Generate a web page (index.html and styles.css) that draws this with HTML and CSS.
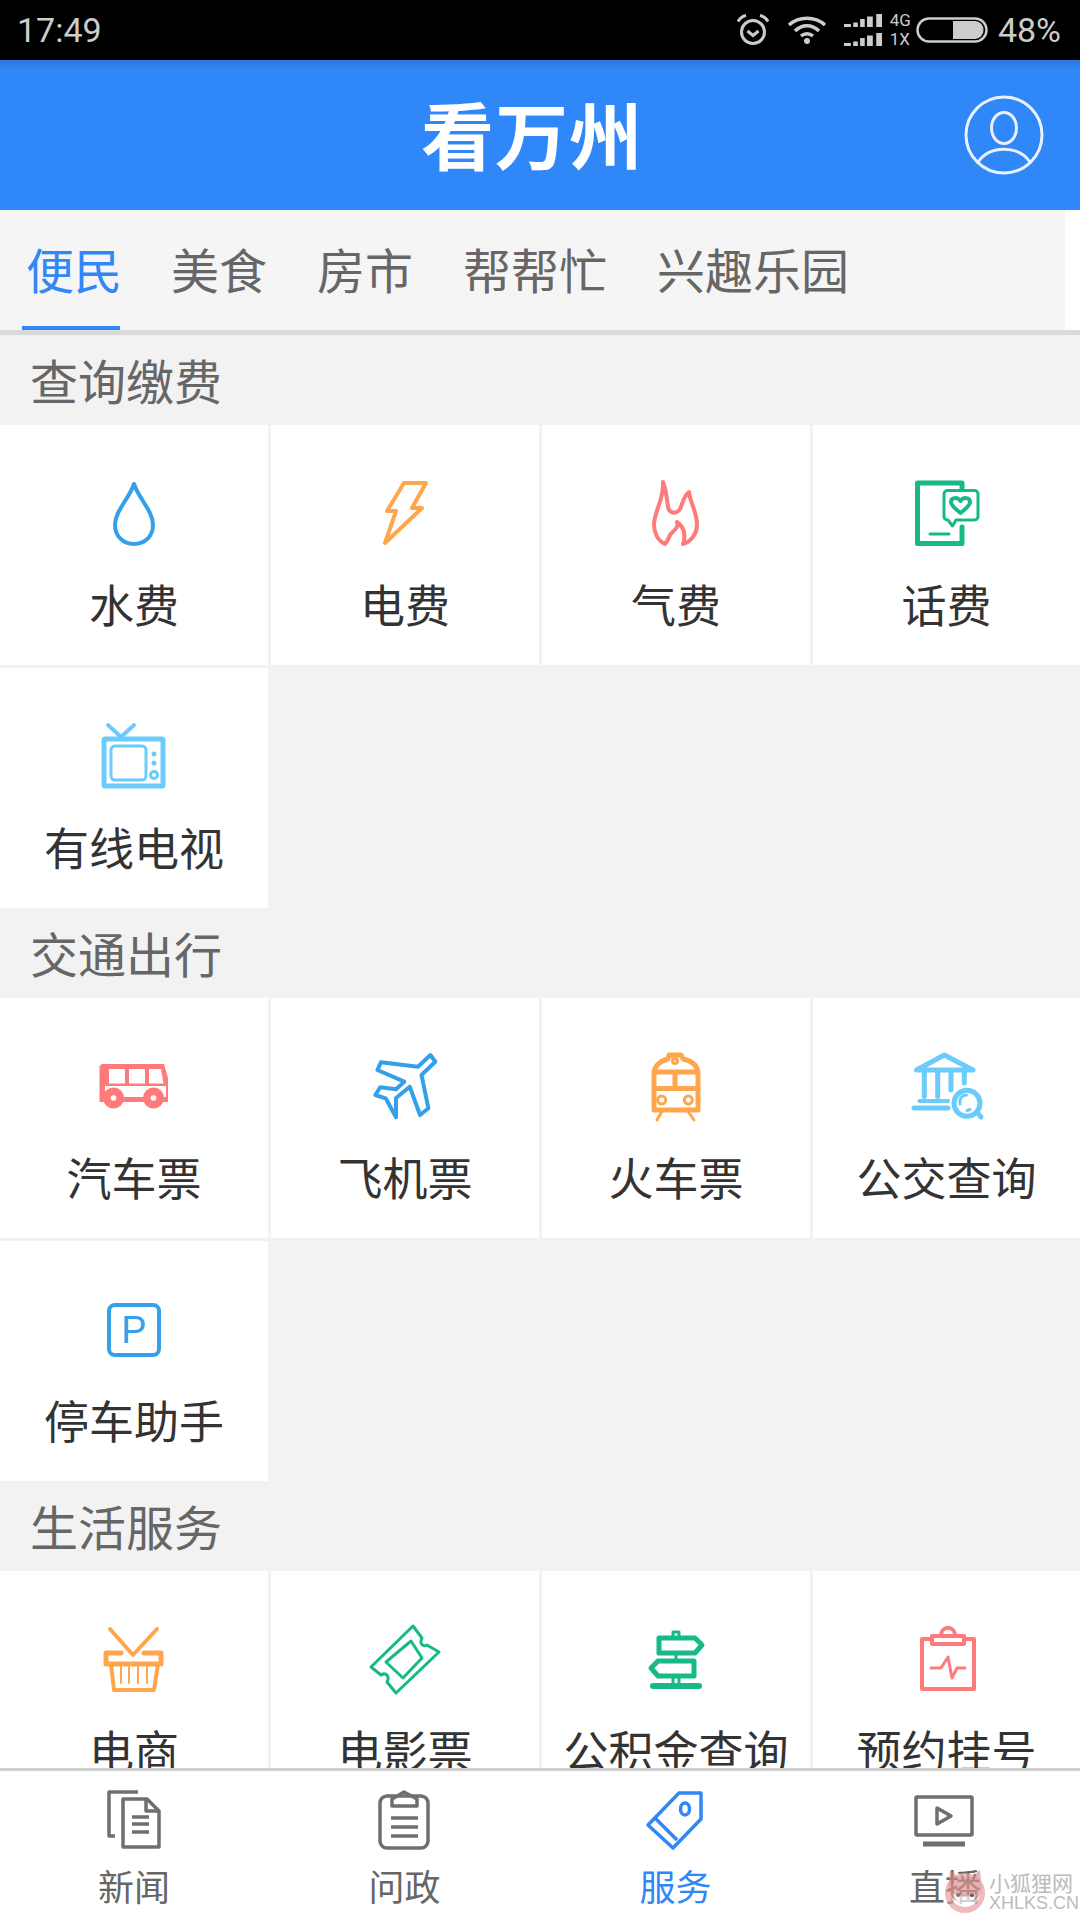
FILE: index.html
```html
<!DOCTYPE html>
<html lang="zh-CN">
<head>
<meta charset="utf-8">
<title>看万州</title>
<link rel="stylesheet" href="styles.css">
</head>
<body>
<div class="app">
  <div class="status">
    <span class="clock">17:49</span>
    <div class="status-right">
      <svg class="s-alarm" viewBox="0 0 36 36"><circle cx="18" cy="20" r="11.500"/><path d="M12.500 19l5.500 4.500 5.500-4.500"/><path d="M3 9.500C5 6 8 4 11 3.500M33 9.500C31 6 28 4 25 3.500"/></svg>
      <svg class="s-wifi" viewBox="0 0 40 30"><path d="M2 10C12 1 28 1 38 10"/><path d="M8 16C15 9 25 9 32 16"/><path d="M14 21C17.500 18 22.500 18 26 21"/><circle class="dot" cx="20" cy="26" r="3"/></svg>
      <svg class="s-signal" viewBox="0 0 33 33" preserveAspectRatio="none"><path d="M0 10h6v3H0zM8 8.500h4V13H8zM14 5h4v8h-4zM20 2.500h5V13h-5zM28 0h5v13h-5z"/><path d="M0 29h6v3H0zM8 27.500h4V32H8zM14 24h4v8h-4zM20 21.500h5V32h-5zM28 19h5v13h-5z"/></svg>
      <div class="s-net"><span>4G</span><span>1X</span></div>
      <svg class="s-batt" viewBox="0 0 72 26"><rect x="1.500" y="1.500" width="69" height="23" rx="11.500"/><path class="fill" d="M37 4h22a8.500 8.500 0 0 1 8.500 9 8.500 8.500 0 0 1-8.500 9H37z"/></svg>
      <span class="pct">48%</span>
    </div>
  </div>

  <header class="header">
    <h1 class="title">看万州</h1>
    <svg class="avatar" viewBox="0 0 80 80"><circle cx="40" cy="40" r="38"/><ellipse cx="40" cy="33" rx="12.500" ry="15.500"/><path d="M14 67C26 50 54 50 66 67"/></svg>
  </header>

  <nav class="tabs">
    <a class="tab active"><span>便民</span></a>
    <a class="tab"><span>美食</span></a>
    <a class="tab"><span>房市</span></a>
    <a class="tab"><span>帮帮忙</span></a>
    <a class="tab"><span>兴趣乐园</span></a>
  </nav>

  <main class="content">
    <h2 class="section">查询缴费</h2>
    <div class="grid">
      <div class="cell"><svg class="ico st-blue" viewBox="0 0 80 80"><path d="M40 11C35 26 21 38 21 52C21 63 29 71 40 71S59 63 59 52C59 38 45 26 40 11Z"/></svg><span class="lbl">水费</span></div>
      <div class="cell"><svg class="ico st-orange" viewBox="0 0 80 80"><path d="M39 10H61L47 35H57L20 70L31 38H22Z"/></svg><span class="lbl">电费</span></div>
      <div class="cell"><svg class="ico st-red" viewBox="0 0 80 80"><path d="M27 9C31 20 31 28 32 34C33 40 40 42 44 36C47 30 47 24 53 19C54 30 61 38 61 52C61 60 56 68 47 71C50 62 48 54 41 49C43 56 36 58 34 62C32 66 32 68 29 71C22 68 18 60 18 52C18 38 28 28 27 9Z"/></svg><span class="lbl">气费</span></div>
      <div class="cell"><svg class="ico st-green" viewBox="0 0 80 80"><path class="w5" d="M55 16V10H10.500V70.500H55V54"/><path class="w3" d="M23 61H42"/><path class="w3" d="M37 21a3.500 3.500 0 0 1 3.500-3.500H67.500a3.500 3.500 0 0 1 3.500 3.500V43.500a3.500 3.500 0 0 1-3.500 3.500H49L45.500 53L41 47H40.500a3.500 3.500 0 0 1-3.500-3.500Z"/><path class="w4" d="M53.500 40C47 35 44 32 44 29C44 24.500 50.500 23.500 53.500 28C56.500 23.500 63 24.500 63 29C63 32 60 35 53.500 40Z"/></svg><span class="lbl">话费</span></div>
      <div class="cell"><svg class="ico st-sky" viewBox="0 0 80 80"><path d="M14 9L27 21L40 9"/><rect class="w5" x="10" y="23" width="59" height="47" rx="1"/><rect class="w3" x="17" y="30" width="35" height="34" rx="4"/><circle class="fsky" cx="60" cy="38" r="2.500"/><circle class="fsky" cx="60" cy="47" r="2.500"/><circle class="w3" cx="60" cy="59" r="3.500"/></svg><span class="lbl">有线电视</span></div>
    </div>

    <h2 class="section">交通出行</h2>
    <div class="grid">
      <div class="cell"><svg class="ico" viewBox="0 0 80 80"><path class="fred" d="M8 18H70L74 32V56H5.500V20Z"/><path class="fw" d="M15 23H31V37.500H15ZM35 23H51V37.500H35ZM55 23H67L69.500 37.500H55ZM11 40H72V51H11Z"/><circle class="fred" cx="19.500" cy="52" r="10.500"/><circle class="fred" cx="59.500" cy="52" r="10.500"/><circle class="fw" cx="19.500" cy="52" r="2.800"/><circle class="fw" cx="59.500" cy="52" r="2.800"/></svg><span class="lbl">汽车票</span></div>
      <div class="cell"><svg class="ico st-blue" viewBox="0 0 80 80"><path d="M65.400 9L70.300 15.700L56.500 29L63.400 62.300L55 69L44.800 40.700L31 52L31 71.300L20.700 52.300L10.300 49L15.200 41.300L31 43.300L39.300 35.700L12.400 24L15.900 16.300L53 20.700Z"/></svg><span class="lbl">飞机票</span></div>
      <div class="cell"><svg class="ico st-orange" viewBox="0 0 80 80"><path class="w5" d="M33 9H45L47 13C56 15 62 20 62 28V64H18V28C18 20 24 15 32 13Z"/><circle class="w3" cx="39" cy="15" r="2.500"/><path class="w5" d="M19 26H61M19 42.500H61M39 26V42.500"/><circle class="w3" cx="25.700" cy="54" r="4"/><circle class="w3" cx="52.300" cy="54" r="4"/><path class="w3" d="M25.500 66L21 74M52.500 66L58 74"/></svg><span class="lbl">火车票</span></div>
      <div class="cell"><svg class="ico st-sky" viewBox="0 0 80 80"><path class="w5" d="M37.300 9L66 24H9.500Z"/><path class="w5" d="M17.300 25V50.500M30.700 25V50.500M44 25V44M57.300 25V37"/><path class="w4" d="M12.500 55H41"/><path class="w5" d="M7 62H41"/><circle class="w5" cx="60" cy="57.300" r="13"/><path class="w5" d="M70 66L74 71"/><path class="w3" d="M53 58C52 53 55 49 59.500 49M60 64.500L63 63.500"/></svg><span class="lbl">公交查询</span></div>
      <div class="cell"><svg class="ico st-blue" viewBox="0 0 80 80"><rect x="15" y="16" width="50" height="50" rx="6"/><text class="p-letter" x="40" y="54">P</text></svg><span class="lbl">停车助手</span></div>
    </div>

    <h2 class="section">生活服务</h2>
    <div class="grid">
      <div class="cell"><svg class="ico st-orange" viewBox="0 0 80 80"><path d="M16 10L39 36L63 10"/><path class="w5" d="M27 34H12V45H67V34H50"/><path d="M17 45L20 71H60L64 45"/><path class="w2" d="M27 48V64M35 48V64M44 48V64M53 48V64"/></svg><span class="lbl">电商</span></div>
      <div class="cell"><svg class="ico st-green" viewBox="0 0 80 80"><path class="w3" d="M48 7L57 19C54 25 58 28 62 26L74 33L31 74L22 63C25 57 21 53 16 56L6 48Z"/><path class="w3" d="M46 22L57 39L38 59L21 43Z"/></svg><span class="lbl">电影票</span></div>
      <div class="cell"><svg class="ico st-green" viewBox="0 0 80 80"><path class="w5" d="M23 19H59L66 26L59 34H23Z"/><path class="w5" d="M58 42H22L15 49L22 57H58Z"/><path class="w3" d="M37 19V13H43V19M40 34V42M37 57V66M43 57V66"/><path class="w6" d="M17 67H63"/></svg><span class="lbl">公积金查询</span></div>
      <div class="cell"><svg class="ico st-red" viewBox="0 0 80 80"><path d="M24 20H15V70H67V20H58"/><path d="M25 17H57V25H25Z"/><path d="M34 17C34 6 48 6 48 17"/><path class="w3" d="M24 49H34L41 38L45 59L50 49H58"/></svg><span class="lbl">预约挂号</span></div>
    </div>
  </main>

  <footer class="tabbar">
    <a class="bt"><svg class="bt-ico st-gray" viewBox="0 0 80 62"><path d="M44 3H15V47H21"/><path d="M29 10H53L65 22V58H29Z"/><path d="M52 10V22H65"/><path d="M38 28H55M38 35H55M38 43H55"/></svg><span>新闻</span></a>
    <a class="bt"><svg class="bt-ico st-gray" viewBox="0 0 80 62"><rect x="15" y="7" width="48" height="52" rx="7"/><path d="M27 17V10L39 3L52 10V17Z"/><path d="M26 29H53M26 38H53M26 47H53"/></svg><span>问政</span></a>
    <a class="bt on"><svg class="bt-ico st-main" viewBox="0 0 80 62"><path d="M43 4H65V30L37 59L12 36Z"/><path d="M18 28L41 51"/><ellipse cx="49" cy="20" rx="4.500" ry="6"/></svg><span>服务</span></a>
    <a class="bt"><svg class="bt-ico st-gray" viewBox="0 0 80 62"><rect x="11" y="8" width="56" height="38" rx="1"/><path d="M32 19L46 27L32 35Z"/><path class="w5" d="M18 55H60"/></svg><span>直播</span></a>
  </footer>

  <div class="mark">
    <svg class="fox" viewBox="0 0 44 46"><circle class="fox-ring" cx="22" cy="25" r="20"/><circle class="fox-in" cx="22" cy="24" r="15"/><path class="fox-head" d="M7 2L15 9H29L37 2L39 22C37 30 30 34 22 37C14 34 7 30 5 22Z"/><path class="fox-face" d="M10 26C16 28 28 28 34 26C30 34 26 37 22 38C18 37 14 34 10 26Z"/><circle class="fox-eye" cx="15" cy="27" r="2"/><circle class="fox-eye" cx="29" cy="27" r="2"/></svg>
    <div class="mark-text"><span class="m1">小狐狸网</span><span class="m2">XHLKS.CN</span></div>
  </div>
</div>
</body>
</html>
```

FILE: styles.css
```css
* { box-sizing: border-box; }
html, body { margin: 0; padding: 0; }
body { font-family: "Noto Sans CJK SC", "Noto Sans", sans-serif; background: #fff; }
.app { position: relative; width: 1080px; height: 1920px; display: flex; flex-direction: column; overflow: hidden; }

.status { height: 60px; background: #000; color: #ccc; display: flex; align-items: center; justify-content: space-between; padding: 0 19px 0 17px; font-family: Roboto, sans-serif; flex: none; }
.clock { font-size: 34px; line-height: 1; }
.status-right { display: flex; align-items: center; }
.status-right svg { fill: none; stroke: #ccc; }
.s-alarm { width: 36px; height: 36px; stroke-width: 3; margin-right: 16px; }
.s-wifi { width: 40px; height: 30px; stroke-width: 3.500; margin-right: 17px; }
.s-wifi .dot { fill: #ccc; stroke: none; }
.s-signal { width: 38px; height: 33px; margin-right: 8px; }
.status-right .s-signal { fill: #ccc; stroke: none; }
.s-net { display: flex; flex-direction: column; font-size: 17px; line-height: 19px; margin-right: 5px; }
.s-batt { width: 72px; height: 26px; stroke-width: 2.500; margin-right: 10px; }
.status-right .fill { fill: #ccc; stroke: none; }
.pct { font-size: 34px; line-height: 1; }

.header { position: relative; height: 150px; flex: none; display: flex; align-items: center; justify-content: center; padding: 0 16px 6px 0; background: linear-gradient(#2b78dc, #3087f7 10px); }
.title { margin: 0; color: #fff; font-size: 73px; font-weight: 700; line-height: 1; letter-spacing: 1px; }
.avatar { position: absolute; right: 36px; top: 35px; width: 80px; height: 80px; fill: none; stroke: #e8f1fd; stroke-width: 3; }

.tabs { height: 125px; width: 100%; flex: none; display: flex; background: linear-gradient(90deg, #f5f5f5 1065px, #fff 1065px); border-bottom: 5px solid #dadada; }
.tab { display: block; padding: 0 25px; font-size: 48px; line-height: 1; color: #666; height: 120px; }
.tab:first-child { padding-left: 22px; padding-right: 26px; }
.tab span { display: block; height: 120px; padding-top: 34px; white-space: nowrap; }
.tab.active { color: #3087f7; }
.tab.active span { width: 98px; padding-left: 4px; border-bottom: 4px solid #3087f7; }

.content { flex: 1; min-height: 0; overflow: hidden; background: #f2f2f2; }
.section { margin: 0; height: 90px; padding-left: 30px; font-size: 48px; font-weight: 400; line-height: 88px; color: #666; }
.grid { display: grid; grid-template-columns: 268px 268px 268px 1fr; gap: 3px; }
.cell { height: 240px; background: #fff; display: flex; flex-direction: column; align-items: center; padding-top: 48px; }
.lbl { margin-top: 18px; font-size: 45px; line-height: 66px; color: #333; white-space: nowrap; }

.ico { width: 80px; height: 80px; display: block; fill: none; flex: none; stroke-width: 4; stroke-linejoin: round; stroke-linecap: round; }
.st-blue { stroke: #35a0ea; }
.st-orange { stroke: #ffa64d; }
.st-red { stroke: #ff7b7b; }
.st-green { stroke: #16b987; }
.st-sky { stroke: #6bcbfb; }
.st-gray { stroke: #6f6f6f; }
.st-main { stroke: #3087f7; }
.w2 { stroke-width: 2; }
.w3 { stroke-width: 3; }
.w4 { stroke-width: 4; }
.w5 { stroke-width: 5; }
.w6 { stroke-width: 6; }
.fred { fill: #ff7b7b; stroke: none; }
.fw { fill: #fff; stroke: none; }
.fsky { fill: #6bcbfb; stroke: none; }
.p-letter { font-family: "Liberation Sans", sans-serif; font-size: 38px; fill: #35a0ea; stroke: none; text-anchor: middle; }

.tabbar { height: 152px; flex: none; background: #fff; border-top: 3px solid #d0d0d0; display: grid; grid-template-columns: 268px 273px 269px 1fr; }
.bt { display: flex; flex-direction: column; align-items: center; color: #666; font-size: 36px; line-height: 44px; padding-top: 18px; }
.bt.on { color: #3087f7; }
.bt-ico { width: 80px; height: 62px; display: block; flex: none; fill: none; stroke-width: 3.500; stroke-linejoin: round; margin-bottom: 12px; }

.mark { position: absolute; left: 943px; top: 1868px; display: flex; align-items: center; gap: 2px; }
.fox { width: 44px; height: 46px; opacity: .7; }
.fox-ring { fill: #e8a0a0; }
.fox-in { fill: #fff; }
.fox-head { fill: #d98080; opacity: .85; }
.fox-face { fill: #fff; }
.fox-eye { fill: #444; }
.mark-text { display: flex; flex-direction: column; color: #bbb; }
.m1 { font-size: 21px; line-height: 23px; }
.m2 { font-family: "Liberation Sans", sans-serif; font-size: 18px; line-height: 18px; }
```
